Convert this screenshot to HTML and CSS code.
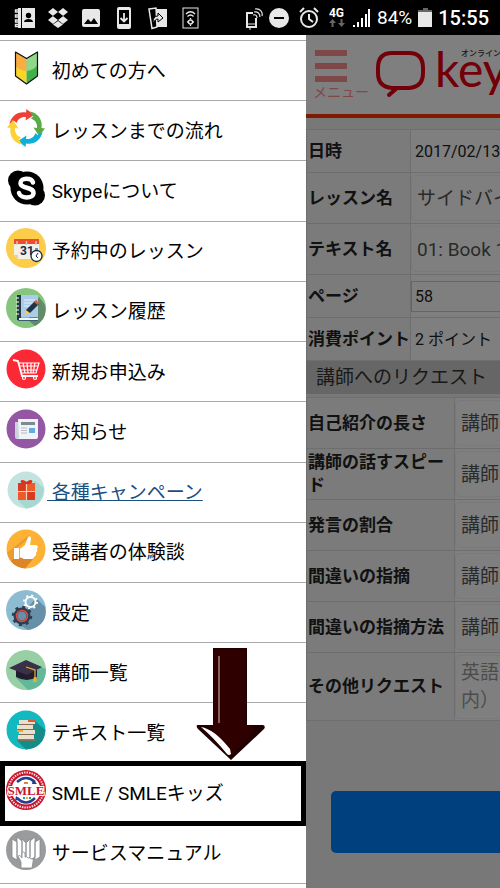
FILE: index.html
```html
<!DOCTYPE html>
<html lang="ja">
<head>
    <meta charset="UTF-8">
    <meta name="viewport" content="width=device-width, initial-scale=1.0">
    <title>メニュー</title>
    <link rel="stylesheet" href="styles.css">
</head>
<body>
    <div class="statusbar">
        <div class="status-left">
            <svg viewBox="0 0 22 24" width="22" height="24"><path fill="#e8e8e8" d="M4 2h3v20H4zM8 2h13v20H8z"/><g fill="none" stroke="#e8e8e8" stroke-width="1.4"><path d="M6 4H1.500v2H5M6 9H1.500v2H5M6 14H1.500v2H5M6 18.500H1.500v2H5"/></g><circle cx="14.500" cy="9.500" r="2.700" fill="#000"/><path d="M10 16c0-4 9-4 9 0z" fill="#000"/></svg>
            <svg viewBox="0 0 22 24" width="22" height="24"><path fill="#e8e8e8" d="M6 2l5 4-5 4-5-4zM16 2l5 4-5 4-5-4zM6 10l5 4-5 4-5-4zM16 10l5 4-5 4-5-4zM6 18.500l5-3.500 5 3.500-5 3.500z"/><path fill="#000" d="M11 6.500l5 3.500-5 3.500L6 10z"/></svg>
            <svg viewBox="0 0 22 24" width="22" height="24"><rect x="2" y="3" width="18" height="18" rx="2" fill="#e8e8e8"/><path fill="#000" d="M4 18l4-5 3 3 3-4 4 6z"/></svg>
            <svg viewBox="0 0 22 24" width="22" height="24"><rect x="4" y="1" width="14" height="22" rx="2" fill="#e8e8e8"/><path fill="#000" d="M6 4h10v14H6z"/><path d="M11 7v8M7.500 12l3.500 3.500 3.500-3.500" fill="none" stroke="#e8e8e8" stroke-width="1.800"/></svg>
            <svg viewBox="0 0 22 24" width="22" height="24"><path fill="#e8e8e8" d="M9 3h12v18H9z"/><path d="M3 3l7-1 1 19-5 1.500z" fill="#000" stroke="#e8e8e8" stroke-width="1.500"/><path fill="#e8e8e8" d="M7 17c0-5 2-7 5-7V7l5 5-5 4v-3c-2 0-3 1-5 4z" stroke="#000"/></svg>
            <svg viewBox="0 0 22 24" width="22" height="24"><rect x="4" y="2" width="15" height="20" fill="#000" stroke="#e8e8e8"/><g fill="none" stroke="#e8e8e8" stroke-width="1.300"><path d="M7 8c3-3 6-3 9 0M8.500 10.500c2-2 4-2 6 0"/><circle cx="11.500" cy="16" r="2"/><path d="M11.500 12v1.500M11.500 18.500V20M8 16h1.500M13.500 16H15"/></g></svg>
        </div>
        <div class="status-right">
            <svg viewBox="0 0 18 24" width="18" height="24"><path d="M8 7H2v14h9V12" fill="none" stroke="#e8e8e8" stroke-width="2"/><path d="M2 18h9M5 22v2" stroke="#e8e8e8"/><path d="M8 9c3-1 4 1 4 3M9 6c4-1 6 2 6 5M10 3c5-1 8 3 7 7" fill="none" stroke="#e8e8e8" stroke-width="1.200"/></svg>
            <svg viewBox="0 0 20 24" width="20" height="24"><circle cx="10" cy="12" r="10" fill="#e8e8e8"/><path d="M5 12h10" stroke="#000" stroke-width="2"/></svg>
            <svg viewBox="0 0 28 24" width="28" height="24"><g fill="none" stroke="#e8e8e8" stroke-width="2"><circle cx="14" cy="13" r="8"/><path d="M14 8v5l4 3M5 6l4-4M23 6l-4-4"/></g></svg>
            <span class="network">4G<svg viewBox="0 0 16 8" width="16" height="8"><path fill="#666" d="M0 4l3.500-4L7 4H4.500v4h-2V4zM9 4h2.500V0h2v4H16l-3.500 4z"/></svg></span>
            <svg viewBox="0 0 18 24" width="18" height="24"><path fill="#fff" d="M0 19h2v2H0zM4 16h2v5H4zM8 12h2v9H8zM12 8h2v13h-2zM15 3h2v18h-2z"/></svg>
            <span class="battery">84%</span>
            <svg viewBox="0 0 14 24" width="14" height="24"><path fill="#666" d="M5 2h5v2h4v3H0V4h5z"/><path fill="#e8e8e8" d="M0 6h14v15H0z"/></svg>
            <span class="clock">15:55</span>
        </div>
    </div>

    <div class="screen">
        <nav class="drawer">
            <ul class="menu">
                <li><a href="#">
                    <svg class="icon" viewBox="0 0 40 40"><path fill="#fbd428" d="M9.500 4l11 6.500V36l-11-8z"/><path fill="#44b04a" d="M31.500 4l-11 6.500V36l11-8z"/><path fill="#f9ac42" d="M9.500 4l11 6.500V23q-8-1-11-5z"/><path fill="#8fd88a" d="M31.500 4l-11 6.500V23q8-1 11-6z"/><path d="M9.500 4l11 6.500L31.500 4v24l-11 8-11-8z" fill="none" stroke="#111" stroke-width="1.200" stroke-linejoin="round"/></svg>
                    <span>&nbsp;初めての方へ</span></a></li>
                <li><a href="#">
                    <svg class="icon" viewBox="0 0 40 40"><path fill="#ee4036" d="M3.500 16C5 8 12 3 20 4.500L20.500 1l7.500 6-8.500 5.500.500-3.500c-5-.5-8 2-9.500 6l-2-2z"/><path fill="#5aab46" transform="rotate(90 20 20)" d="M3.500 16C5 8 12 3 20 4.500L20.500 1l7.500 6-8.500 5.500.500-3.500c-5-.5-8 2-9.500 6l-2-2z"/><path fill="#0fb0d8" transform="rotate(180 20 20)" d="M3.500 16C5 8 12 3 20 4.500L20.500 1l7.500 6-8.500 5.500.500-3.500c-5-.5-8 2-9.500 6l-2-2z"/><path fill="#fdd137" transform="rotate(270 20 20)" d="M3.500 16C5 8 12 3 20 4.500L20.500 1l7.500 6-8.500 5.500.500-3.500c-5-.5-8 2-9.500 6l-2-2z"/></svg>
                    <span>&nbsp;レッスンまでの流れ</span></a></li>
                <li><a href="#">
                    <svg class="icon" viewBox="0 0 40 40"><circle cx="21" cy="20" r="16.500"/><circle cx="12" cy="12.500" r="10"/><circle cx="29" cy="27.500" r="10"/><path d="M27 14.500c-1.500-5-12.500-5-12.500.5 0 6 13 3.500 13 10 0 6-13 6-14.500 0" fill="none" stroke="#fff" stroke-width="4.500" stroke-linecap="round"/></svg>
                    <span>&nbsp;Skypeについて</span></a></li>
                <li><a href="#">
                    <svg class="icon" viewBox="0 0 40 40"><circle cx="20" cy="20" r="20" fill="#fbcd4b"/><path fill="#f5f0e4" d="M8 15h25v16H12l-4-4z"/><path fill="#d8d0b8" d="M8 27h4v4z"/><path fill="#ee4b2b" d="M8 11h25v5H8z"/><path d="M11 13v4M20.500 13v4M30 13v4" stroke="#ccc" stroke-width="1.500"/><text x="14" y="27" font-family="Roboto, sans-serif" font-weight="700" font-size="12" fill="#17264c">31</text><circle cx="30.500" cy="28" r="5.500" fill="#fff" stroke="#17264c" stroke-width="1.300"/><path d="M32 25l-2 3 2 2M29 21h3" stroke="#17264c" fill="none"/></svg>
                    <span>&nbsp;予約中のレッスン</span></a></li>
                <li><a href="#">
                    <svg class="icon" viewBox="0 0 40 40"><circle cx="20" cy="20" r="20" fill="#85c57d"/><path fill="#608c69" d="M33 9l6 8q3 14-10 21l-7-6z"/><path fill="#253747" d="M11 7h4v25h-4z"/><path fill="#a8ccea" d="M15 7h17v22H15z"/><path fill="#eef4f8" d="M13 30h19v2H13z"/><path fill="#3d5a70" d="M12 32h20v1H12z"/><path d="M10 10h3M10 14h3M10 18h3M10 22h3M10 26h3" stroke="#fff"/><path d="M18 12h11M18 15h10M18 18h6" stroke="#e4f1fa"/><path fill="#fac850" d="M18 27l2-5 4 3z"/><path fill="#223244" d="M20 22l9-9 4 3-9 9z"/><path fill="#dc5742" d="M28 14l2-2 3 3-1.500 2z"/></svg>
                    <span>&nbsp;レッスン履歴</span></a></li>
                <li><a href="#">
                    <svg class="icon" viewBox="0 0 40 40"><circle cx="20" cy="20" r="19.500" fill="#fb2936"/><g fill="none" stroke="#fff" stroke-width="1.200"><path d="M7 11l5 1 4 15h16" stroke-width="1.800"/><path d="M13 14h20l-3 10H15M14 17h18M15 21h16M17 14l2 10M21 14l1 10M25 14v10M29 14l-2 10"/><circle cx="18" cy="29" r="1.500"/><circle cx="29" cy="29" r="1.500"/></g></svg>
                    <span>&nbsp;新規お申込み</span></a></li>
                <li><a href="#">
                    <svg class="icon" viewBox="0 0 40 40"><circle cx="20" cy="20" r="19.500" fill="#9357a4"/><path fill="#ccd2dc" d="M9 13h5v17h-3q-2 0-2-2z"/><path fill="#f0f3f6" d="M12 10h20v18q0 2-2 2H11q2 0 2-2z"/><path fill="#7b8b91" d="M15 13h14v3H15z"/><path d="M15 19h6M15 21.500h6M15 24h6" stroke="#b6bec6"/><path fill="#61ace2" d="M23 19h6v5h-6z"/></svg>
                    <span>&nbsp;お知らせ</span></a></li>
                <li class="campaign"><a href="#">
                    <svg class="icon" viewBox="0 0 40 40"><circle cx="20" cy="20" r="18.500" fill="#c2e3df"/><path fill="#a8d6d1" d="M29 11l9 7q-1 18-18 20.500l-8-8z"/><path fill="#ef5a2a" d="M12 13h17v17H12z"/><path fill="#d83b22" d="M12 13h8v8h-8zM21 21h8v9h-8z"/><path d="M20.500 13v17M12 21.500h17" stroke="#fbd0b0" stroke-width="1.200"/><path d="M20.500 13c-7-5-6 1 0 0 7-5 6 1 0 0" fill="none" stroke="#d9301f" stroke-width="2"/></svg>
                    <span>&nbsp;各種キャンペーン</span></a></li>
                <li><a href="#">
                    <svg class="icon" viewBox="0 0 40 40"><circle cx="20" cy="20" r="19.500" fill="#fdb236"/><path fill="#db8528" d="M24 8l-14 12-1 10 8 9.300q-13-2.300-16-15.300L23 6z" opacity=".5"/><path fill="#db8528" d="M8 29h20l-9 10.500Q9 38 5 32z"/><path fill="#fff" d="M8 19h5v11H8zM14 20l5-4 3-8q3-2 3 2l-1 6h6q3 1 1 4 1 2-1 4 1 2-2 4 0 2-3 2H18l-4-2z"/></svg>
                    <span>&nbsp;受講者の体験談</span></a></li>
                <li><a href="#">
                    <svg class="icon" viewBox="0 0 40 40"><circle cx="20" cy="20" r="20" fill="#8dbbd1"/><path fill="#6690a8" d="M30 8l9 9q4 18-17 23L9 32z"/><circle cx="24.500" cy="12" r="5" fill="none" stroke="#fff" stroke-width="2"/><circle cx="24.500" cy="12" r="6.500" fill="none" stroke="#fff" stroke-width="2" stroke-dasharray="2 3.100"/><circle cx="16" cy="26" r="6.500" fill="#6690a8" stroke="#2c3e50" stroke-width="4"/><circle cx="16" cy="26" r="9" fill="none" stroke="#2c3e50" stroke-width="2.500" stroke-dasharray="3 4.070"/><circle cx="16" cy="26" r="5.500" fill="none" stroke="#e04b43" stroke-width="1.500"/></svg>
                    <span>&nbsp;設定</span></a></li>
                <li><a href="#">
                    <svg class="icon" viewBox="0 0 40 40"><circle cx="20" cy="20" r="20" fill="#98cfa5"/><path fill="#62b899" d="M35 17l4.900 2Q40 38 22 40L10 28z"/><path fill="#221d2c" d="M10 20h21v7q-10 6-21 0z"/><path fill="#3a3149" d="M3 18l17-8 16 7-15 8z"/><path d="M20 17l9 3v9" fill="none" stroke="#e8b02c" stroke-width="1.200"/><path fill="#e8b02c" d="M28 27h2l1 5h-4z"/></svg>
                    <span>&nbsp;講師一覧</span></a></li>
                <li><a href="#">
                    <svg class="icon" viewBox="0 0 40 40"><circle cx="20" cy="20" r="19.500" fill="#12bac0"/><path fill="#168c88" d="M29 11l10.300 9Q38 38 20 39.500l-9-9z"/><path fill="#e8dfcd" d="M13 10h16v4H13zM11 15h16v4H11zM13 20h16v4H13zM12 25h16v5H12z"/><path fill="#e4572b" d="M22 10h7v2h-7zM11 29h18v1.500H11z"/><path fill="#f3a72e" d="M11 20h6v2h-6z"/><path d="M13 14.500h15M12 19.500h16M13 24.500h15" stroke="#846b55"/></svg>
                    <span>&nbsp;テキスト一覧</span></a></li>
                <li class="current"><a href="#">
                    <svg class="icon" viewBox="0 0 40 40"><circle cx="20" cy="20" r="20" fill="#c8152d"/><circle cx="20" cy="20" r="17.500" fill="none" stroke="#f6dbe0" stroke-width="2" stroke-dasharray="1.500 1"/><circle cx="20" cy="20" r="14.500" fill="#fff"/><path d="M11 12q9-8 18 0M11 28q9 9 18 0" fill="none" stroke="#243f91" stroke-width="2.500"/><path fill="#243f91" d="M27 9l4 5h-5zM9 31l1-5 4 3z"/><text x="20" y="25" text-anchor="middle" font-family="Liberation Serif, serif" font-weight="700" font-size="13" fill="#c8152d" stroke="#fff" stroke-width="2" paint-order="stroke">SMLE</text><path d="M17 28h2" stroke="#1b9ad0" stroke-width="2"/><path d="M20 28h2" stroke="#e8b02c" stroke-width="2"/><path d="M23 28h2" stroke="#3a9a4a" stroke-width="2"/><path d="M18 13h4" stroke="#d88a36" stroke-width="2"/></svg>
                    <span>&nbsp;SMLE / SMLEキッズ</span></a>
                    <svg class="arrow" viewBox="0 0 70 113"><defs><linearGradient id="shaft"><stop offset="0" stop-color="#120000"/><stop offset=".18" stop-color="#2e0000"/><stop offset=".85" stop-color="#2e0000"/><stop offset="1" stop-color="#120000"/></linearGradient></defs><path fill="#200000" d="M1 77h16V0h34v77h16q3 1 1 4L35 112 2 81q-2-2-1-4z"/><path fill="url(#shaft)" d="M18 2h32v76h13L35 108 8 79h10z"/><path d="M23 8v67" stroke="#876060" stroke-width="2"/><path fill="#fff" d="M5 79q13 2 29 22l1 5q-2 2-4 0Q18 90 5 79z"/></svg>
                </li>
                <li><a href="#">
                    <svg class="icon" viewBox="0 0 40 40"><circle cx="20" cy="20" r="20" fill="#999b9c"/><g fill="#fff" stroke="#85898a" stroke-width=".8"><path d="M6 9l5 3v18l-5-3zM11 7l5 4v19l-5-3zM16 9l4 4v18l-4-4zM34 9l-5 3v18l5-3zM29 7l-5 4v19l5-3zM24 9l-4 4v18l4-4z"/><path d="M15 38v-6l-3-6q2-2 4 2V23q2-2 3 0v4q2-1 3 1 2-1 3 1 3-1 2 3l-1 6z"/></g></svg>
                    <span>&nbsp;サービスマニュアル</span></a></li>
            </ul>
        </nav>

        <main class="content">
            <div class="page">
                <header class="header">
                    <button type="button" class="menu-button"><span class="bars"></span>メニュー</button>
                    <div class="logo">
                        <svg viewBox="0 0 52 50" width="52" height="50"><path d="M22 38h12q14-1 14-15v-5Q48 3 34 3H17Q3 3 3 18v5q0 14 14 15h5l-8 7" fill="none" stroke="#e60012" stroke-width="4" stroke-linecap="round"/></svg>
                        <span class="logo-name">key</span>
                        <span class="logo-sub">オンライン</span>
                    </div>
                </header>

                <table class="details">
                    <tr><th>日時</th><td class="plain">2017/02/13</td></tr>
                    <tr class="tall"><th><label for="lesson">レッスン名</label></th><td><select id="lesson"><option>サイドバイ</option></select></td></tr>
                    <tr class="tall"><th><label for="text">テキスト名</label></th><td><select id="text"><option>01: Book 1</option></select></td></tr>
                    <tr><th><label for="pageno">ページ</label></th><td><input type="text" id="pageno" value="58"></td></tr>
                    <tr><th>消費ポイント</th><td class="plain">2 ポイント</td></tr>
                </table>
                <h2>講師へのリクエスト</h2>
                <table class="requests">
                    <tr class="tall"><th><label for="intro">自己紹介の長さ</label></th><td><select id="intro"><option>講師</option></select></td></tr>
                    <tr class="tall"><th><label for="speed">講師の話すスピード</label></th><td><select id="speed"><option>講師</option></select></td></tr>
                    <tr class="tall"><th><label for="ratio">発言の割合</label></th><td><select id="ratio"><option>講師</option></select></td></tr>
                    <tr class="tall"><th><label for="fix">間違いの指摘</label></th><td><select id="fix"><option>講師</option></select></td></tr>
                    <tr class="tall"><th><label for="method">間違いの指摘方法</label></th><td><select id="method"><option>講師</option></select></td></tr>
                    <tr class="tallest"><th><label for="other">その他リクエスト</label></th><td><textarea id="other" rows="2" placeholder="英語&#10;内）"></textarea></td></tr>
                </table>
                <button type="button" class="submit" aria-label="予約"></button>
            </div>
        </main>
    </div>
</body>
</html>
```

FILE: styles.css
```css
* {
    box-sizing: border-box;
}
body {
    margin: 0;
    height: 100vh;
    display: flex;
    flex-direction: column;
    overflow: hidden;
    font-family: Roboto, "Noto Sans CJK JP", sans-serif;
    font-size: 19px;
    color: #000;
    background-color: #fff;
}
button, input, select, textarea {
    font-family: inherit;
}

/* Status bar */
.statusbar {
    flex: none;
    height: 35px;
    display: flex;
    justify-content: space-between;
    align-items: center;
    padding: 0 11px 0 14px;
    background-color: #000;
    color: #fff;
}
.status-left, .status-right {
    display: flex;
    align-items: center;
}
.status-left {
    gap: 11px;
}
.status-right {
    gap: 6px;
}
.network {
    width: 18px;
    display: flex;
    flex-direction: column;
    font-size: 12px;
    line-height: 11px;
    font-weight: 700;
}
.clock {
    font-size: 20px;
    font-weight: 500;
}

.screen {
    flex: 1;
    min-height: 0;
    display: flex;
}

/* Drawer */
.drawer {
    flex: none;
    width: 306px;
    display: flex;
    padding: 5px 0 4px;
    background-color: #fff;
}
.menu {
    flex: 1;
    display: flex;
    flex-direction: column;
    margin: 0;
    padding: 0;
    list-style: none;
    border-top: 1px solid #aaa;
}
.menu li {
    flex: 1;
    display: flex;
    position: relative;
    border-bottom: 1px solid #aaa;
}
.menu a {
    flex: 1;
    display: flex;
    align-items: center;
    gap: 1px;
    padding-left: 6px;
    color: #000;
    text-decoration: none;
}
.menu span {
    margin-bottom: 3px;
}
.icon {
    width: 40px;
    height: 40px;
    margin-bottom: 6px;
}
.menu .campaign a {
    color: #1c4f80;
}
.campaign .icon {
    margin-bottom: 4px;
}
.campaign span {
    text-decoration: underline;
}
.current::after {
    content: "";
    position: absolute;
    inset: -3px 0;
    border: 5px solid #000;
    pointer-events: none;
}
.arrow {
    position: absolute;
    left: 196px;
    bottom: 62px;
    width: 70px;
    height: 113px;
}

/* Page behind the drawer */
.content {
    flex: 1;
    min-width: 0;
    position: relative;
    overflow: hidden;
    background-color: #f0f0f0;
}
.content::after {
    content: "";
    position: absolute;
    inset: 0;
    background-color: rgba(0, 0, 0, 0.5);
}
.page {
    min-width: 480px;
}
.header {
    display: flex;
    align-items: flex-start;
    gap: 6px;
    height: 83px;
    padding: 15px 0 0 7px;
    background-color: #fff;
    border-bottom: 4px solid #ff3300;
}
.menu-button {
    width: 56px;
    padding: 0;
    border: none;
    background: none;
    color: #ff9090;
    font-size: 14px;
    line-height: 20px;
    text-align: left;
    white-space: nowrap;
}
.bars {
    display: block;
    width: 32px;
    height: 32px;
    margin-left: 2px;
    background: repeating-linear-gradient(#ff9090 0 6px, #fff 6px 13px);
}
.logo {
    display: flex;
    position: relative;
    color: #e60012;
}
.logo-name {
    margin-left: 8px;
    font-family: Lato, sans-serif;
    font-size: 48px;
    line-height: 38px;
}
.logo-sub {
    position: absolute;
    left: 86px;
    top: -1px;
    color: #333;
    font-size: 8px;
    line-height: 10px;
    font-weight: 500;
    white-space: nowrap;
}
table {
    width: 100%;
    table-layout: fixed;
    border-collapse: collapse;
    font-size: 17px;
    line-height: 23px;
}
.details {
    margin-top: 11px;
}
.requests {
    margin-top: 3px;
}
tr {
    height: 43px;
}
.tall {
    height: 51px;
}
.tallest {
    height: 68px;
}
th, td {
    padding: 0;
    border: 1px solid #dcdcdc;
    text-align: left;
}
th {
    width: 104px;
    padding-left: 1px;
    background-color: #f6f6f6;
    color: #222;
}
.requests th {
    width: 148px;
}
td {
    background-color: #fff;
    color: #222;
    font-size: 16px;
}
.plain {
    padding-left: 4px;
}
select {
    display: block;
    width: 100%;
    height: 46px;
    padding: 0 5px;
    appearance: none;
    border: 1px solid #f2f2f2;
    border-radius: 5px;
    background-color: #fff;
    color: #555;
    font-size: 19px;
}
td input {
    display: block;
    width: 100%;
    height: 31px;
    padding: 0 3px;
    border: 1px solid #ccc;
    color: #222;
    font-size: 16px;
}
textarea {
    display: block;
    width: 100%;
    height: 64px;
    padding: 3px 5px;
    border: 1px solid #f2f2f2;
    border-radius: 5px;
    resize: none;
    font-size: 19px;
    line-height: 28px;
}
textarea::placeholder {
    color: #999;
}
h2 {
    margin: 0;
    padding-left: 10px;
    background-color: #cdcdcd;
    color: #333;
    font-size: 19px;
    line-height: 33px;
    font-weight: 400;
}
.submit {
    display: block;
    width: calc(100% - 50px);
    height: 62px;
    margin: 70px 25px 0;
    border: none;
    border-radius: 5px;
    background-color: #0080ff;
}
```
